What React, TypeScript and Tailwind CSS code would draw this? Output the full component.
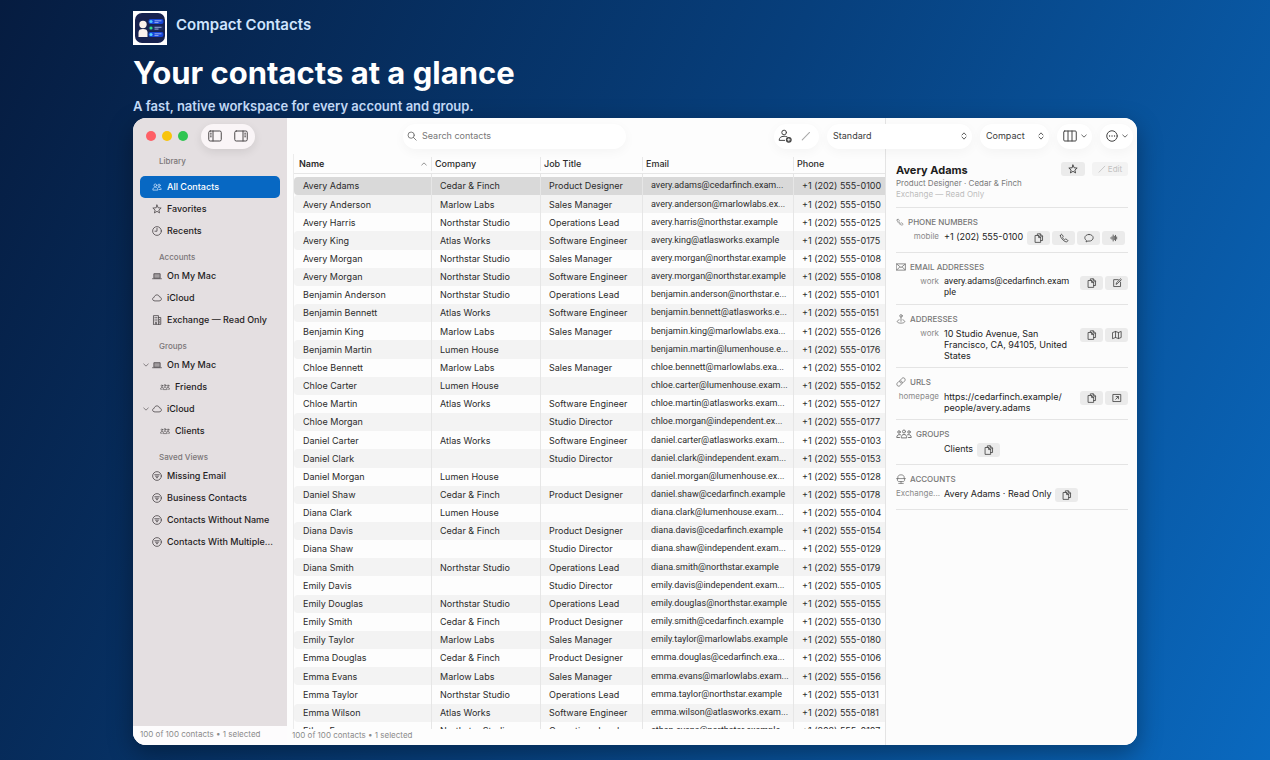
import type { ReactNode } from "react"

type IconProps = { className?: string }

function Svg({ className = "size-3", box = "0 0 24 24", children }: { className?: string; box?: string; children: ReactNode }) {
  return (
    <svg
      viewBox={box}
      className={`shrink-0 ${className}`}
      fill="none"
      stroke="currentColor"
      strokeWidth={2}
      strokeLinecap="round"
      strokeLinejoin="round"
      aria-hidden="true"
    >
      {children}
    </svg>
  )
}

const TwoPeople = ({ className }: IconProps) => (
  <Svg className={className}>
    <circle cx="8" cy="8" r="3.2" />
    <circle cx="17" cy="8" r="2.8" />
    <path d="M2 18.5c0-4 2.5-6 6-6s6 2 6 6zM15 12.6c4-.8 7 1.400 7 5.400h-5" />
  </Svg>
)

const ThreePeople = ({ className }: IconProps) => (
  <Svg className={className} box="0 0 32 20">
    <circle cx="16" cy="5" r="3" />
    <circle cx="6" cy="6" r="2.500" />
    <circle cx="26" cy="6" r="2.500" />
    <path d="M10.500 17c0-4 2-6 5.500-6s5.500 2 5.500 6zM9 11.500C4 10 1.500 13 1.500 17H7M23 11.500c5-1.500 7.500 1.500 7.500 5.500H25" />
  </Svg>
)

const Star = ({ className }: IconProps) => (
  <Svg className={className}>
    <path d="M12 2.500l2.800 6.600 7.200.6-5.500 4.700 1.700 7L12 17.600l-6.200 3.800 1.700-7L2 9.700l7.200-.6z" />
  </Svg>
)

const Clock = ({ className }: IconProps) => (
  <Svg className={className}>
    <circle cx="12" cy="12" r="10.500" />
    <path d="M12 5.500V12.500H7" />
  </Svg>
)

const Laptop = ({ className }: IconProps) => (
  <Svg className={className}>
    <path d="M4.500 16V6.500h15V16z" fill="currentColor" fillOpacity=".45" />
    <path d="M1.500 18.500h21" />
  </Svg>
)

const Cloud = ({ className }: IconProps) => (
  <Svg className={className}>
    <path d="M6.500 19C3.500 19 1.500 17 1.500 14.500c0-2.300 1.600-4 3.800-4.300C6 6.800 8.500 4.500 11.800 4.500c3.200 0 5.500 2 6.200 5 2.700.2 4.500 2.200 4.500 4.700 0 2.700-2 4.800-4.800 4.800z" />
  </Svg>
)

const Building = ({ className }: IconProps) => (
  <Svg className={className}>
    <path d="M3.500 22.500V1.500h12v21zM15.500 6H21v16.500h-5.500M7 6h1M11 6h1M7 10h1M11 10h1M7 14h1M11 14h1M8 22v-4h3v4M18.200 10.500v.5M18.200 14.500v.5M18.200 18.500v.5" />
  </Svg>
)

const Filter = ({ className }: IconProps) => (
  <Svg className={className}>
    <circle cx="12" cy="12" r="10.500" />
    <path d="M6.500 9h11M8.500 12.500h7M10.500 16h3" />
  </Svg>
)

const Chevron = ({ className }: IconProps) => (
  <Svg className={className}>
    <path d="M3 8l9 8.500L21 8" strokeWidth={3.2} />
  </Svg>
)

const UpDown = ({ className }: IconProps) => (
  <Svg className={className}>
    <path d="M6 9l6-6.500L18 9M6 15l6 6.500 6-6.500" strokeWidth={2.6} />
  </Svg>
)

const Copy = ({ className }: IconProps) => (
  <Svg className={className}>
    <path d="M8 5V2h7L20.500 7.500v10.500H16M15 2v5.500h5.500M3.500 6H11l5 5v11.500H3.500zM11 6v5h5" />
  </Svg>
)

const Phone = ({ className }: IconProps) => (
  <Svg className={className}>
    <path d="M3.500 5.500C5 3 6.500 2.500 7.500 4l2.300 3.500c.6 1 .2 1.800-.8 2.900-.6.700-.5 1.200 0 1.900a17 17 0 0 0 3.200 3.200c.7.500 1.300.6 1.900 0 1.100-1 1.900-1.400 2.900-.8l3.500 2.300c1.500 1 1 2.500-1.500 4-4 2.300-17.800-9.500-15.500-15.500z" />
  </Svg>
)

const Bubble = ({ className }: IconProps) => (
  <Svg className={className}>
    <path d="M12 3.500c5.800 0 10 3.500 10 8s-4.200 8-10 8c-.9 0-1.800-.1-2.600-.3L5 21.500l.8-3.800C3.400 16.300 2 14 2 11.500c0-4.500 4.200-8 10-8z" />
  </Svg>
)

const Waveform = ({ className }: IconProps) => (
  <Svg className={className}>
    <path d="M2.500 11.500v1M6 8.500v7M9.500 3v18M13 7v10M16.500 4v16M20 9v6" strokeWidth={2.4} />
  </Svg>
)

const Mail = ({ className }: IconProps) => (
  <Svg className={className}>
    <path d="M1.500 4.500h21v15h-21zM2 5l10 8.500L22 5M2 19l7-7M22 19l-7-7" />
  </Svg>
)

const Compose = ({ className }: IconProps) => (
  <Svg className={className}>
    <path d="M15 4H4v16.500h16.500V10M10 14.500l1-3.500 9.500-9 2 2-9.500 9.500z" />
  </Svg>
)

const Pin = ({ className }: IconProps) => (
  <Svg className={className}>
    <circle cx="12" cy="4.500" r="3" />
    <path d="M12 7.500V17.500M7.500 14C-1 17 3 22 12 22s13-5 4.500-8" />
  </Svg>
)

const MapIcon = ({ className }: IconProps) => (
  <Svg className={className}>
    <path d="M2 6l6.500-2.500 7 2.500L22 3.500V18l-6.500 2.500-7-2.500L2 20.500zM8.500 3.500V18M15.500 6v14.500" />
  </Svg>
)

const LinkIcon = ({ className }: IconProps) => (
  <Svg className={className}>
    <path d="M13 17l-3 3.500c-2 2-5 2-6.700.2s-1.700-4.700.2-6.700L7 10.500c2-2 5-1.800 6.700 0 .8.800 1.300 2 1.300 3M11 7l3-3.500c2-2 5-2 6.700-.2s1.700 4.700-.2 6.700L17 13.500c-2 2-5 1.800-6.700 0-.8-.8-1.300-2-1.300-3" />
  </Svg>
)

const OpenOut = ({ className }: IconProps) => (
  <Svg className={className}>
    <path d="M3 3.500h18v17H3zM9 15l6-6M10 8.500h5.500V14" />
  </Svg>
)

const Tray = ({ className }: IconProps) => (
  <Svg className={className}>
    <path d="M4.500 11V7c0-3 3-5 7.500-5s7.500 2 7.500 5v4M1.500 11h21M3.500 11v4c0 2 1.500 3 4 3h9c2.500 0 4-1 4-3v-4M12 18v4.500M6.500 22.500h11" />
  </Svg>
)

const Pencil = ({ className }: IconProps) => (
  <Svg className={className}>
    <path d="M3 21.500L20.500 3.500" strokeWidth={2.6} />
  </Svg>
)

const AddPerson = ({ className }: IconProps) => (
  <Svg className={className}>
    <circle cx="10.500" cy="6" r="4" strokeWidth={1.7} />
    <path d="M11.500 19.500H2c0-4.500 3-7 8.500-7 2 0 3.500.3 5 1" strokeWidth={1.7} />
    <circle cx="18.500" cy="18.500" r="4" fill="currentColor" />
    <path d="M18.500 16.500v4M16.500 18.500h4" stroke="#fff" strokeWidth={1.5} />
  </Svg>
)

const Columns = ({ className }: IconProps) => (
  <Svg className={className} box="0 0 28 24">
    <rect x="1.500" y="2" width="25" height="20" rx="2" />
    <path d="M10 2v20M18 2v20" />
  </Svg>
)

const More = ({ className }: IconProps) => (
  <Svg className={className}>
    <circle cx="12" cy="12" r="10.500" />
    <path d="M7 12h.1M12 12h.1M17 12h.1" strokeWidth={2.6} />
  </Svg>
)

const SearchIcon = ({ className }: IconProps) => (
  <Svg className={className}>
    <circle cx="10" cy="10" r="7.500" />
    <path d="M15.500 15.500L22 22" />
  </Svg>
)

const PanelLeft = ({ className }: IconProps) => (
  <Svg className={className} box="0 0 28 24">
    <rect x="1.500" y="2" width="25" height="20" rx="3" />
    <path d="M10 2v20M5 6.500h1.500M5 10h1.500M5 13.500h1.500" />
  </Svg>
)

const PanelRight = ({ className }: IconProps) => (
  <Svg className={className} box="0 0 28 24">
    <rect x="1.500" y="2" width="25" height="20" rx="3" />
    <path d="M18 2v20M21.500 6.500H23M21.500 10H23M21.500 13.500H23" />
  </Svg>
)

function AppLogo() {
  const rows = [
    { y: 8, dot: "#4cc3ff", bar: "#1746d8" },
    { y: 14.5, dot: "#2fe08a", bar: "#1b2c63" },
    { y: 21, dot: "#55d3ff", bar: "#1746d8" },
  ]
  return (
    <svg viewBox="0 0 34 34" className="size-[34px]" role="img" aria-label="Compact Contacts logo">
      <rect width="34" height="34" fill="#fff" />
      <rect x="2" y="2" width="30" height="30" rx="7" fill="#17224f" />
      <circle cx="10" cy="13.500" r="3.700" fill="#fbf1ec" />
      <path d="M5.500 26v-4.500c0-2.500 1.500-3.500 4.500-3.500s4.500 1 4.500 3.500V26z" fill="#fbf1ec" />
      {rows.map(({ y, dot, bar }) => (
        <g key={y}>
          <rect x="15.500" y={y} width="15" height="5" rx="2" fill={bar} />
          <circle cx="18" cy={y + 2.5} r="1.600" fill={dot} />
          <path d={`M21.500 ${y + 1.8}h7M21.500 ${y + 3.6}h4`} stroke="#b7c6f5" strokeWidth="0.800" />
        </g>
      ))}
    </svg>
  )
}

const sidebar = [
  {
    title: "Library",
    items: [
      { label: "All Contacts", icon: TwoPeople, active: true },
      { label: "Favorites", icon: Star },
      { label: "Recents", icon: Clock },
    ],
  },
  {
    title: "Accounts",
    items: [
      { label: "On My Mac", icon: Laptop },
      { label: "iCloud", icon: Cloud },
      { label: "Exchange — Read Only", icon: Building },
    ],
  },
  {
    title: "Groups",
    items: [
      { label: "On My Mac", icon: Laptop, open: true },
      { label: "Friends", icon: ThreePeople, nested: true },
      { label: "iCloud", icon: Cloud, open: true },
      { label: "Clients", icon: ThreePeople, nested: true },
    ],
  },
  {
    title: "Saved Views",
    items: [
      { label: "Missing Email", icon: Filter },
      { label: "Business Contacts", icon: Filter },
      { label: "Contacts Without Name", icon: Filter },
      { label: "Contacts With Multiple...", icon: Filter },
    ],
  },
] as {
  title: string
  items: { label: string; icon: (p: IconProps) => ReactNode; active?: boolean; open?: boolean; nested?: boolean }[]
}[]

const contacts = [
  ["Avery Adams", "Cedar & Finch", "Product Designer", "avery.adams@cedarfinch.exam...", "0100"],
  ["Avery Anderson", "Marlow Labs", "Sales Manager", "avery.anderson@marlowlabs.ex...", "0150"],
  ["Avery Harris", "Northstar Studio", "Operations Lead", "avery.harris@northstar.example", "0125"],
  ["Avery King", "Atlas Works", "Software Engineer", "avery.king@atlasworks.example", "0175"],
  ["Avery Morgan", "Northstar Studio", "Sales Manager", "avery.morgan@northstar.example", "0108"],
  ["Avery Morgan", "Northstar Studio", "Software Engineer", "avery.morgan@northstar.example", "0108"],
  ["Benjamin Anderson", "Northstar Studio", "Operations Lead", "benjamin.anderson@northstar.e...", "0101"],
  ["Benjamin Bennett", "Atlas Works", "Software Engineer", "benjamin.bennett@atlasworks.e...", "0151"],
  ["Benjamin King", "Marlow Labs", "Sales Manager", "benjamin.king@marlowlabs.exa...", "0126"],
  ["Benjamin Martin", "Lumen House", "", "benjamin.martin@lumenhouse.e...", "0176"],
  ["Chloe Bennett", "Marlow Labs", "Sales Manager", "chloe.bennett@marlowlabs.exa...", "0102"],
  ["Chloe Carter", "Lumen House", "", "chloe.carter@lumenhouse.exam...", "0152"],
  ["Chloe Martin", "Atlas Works", "Software Engineer", "chloe.martin@atlasworks.exam...", "0127"],
  ["Chloe Morgan", "", "Studio Director", "chloe.morgan@independent.ex...", "0177"],
  ["Daniel Carter", "Atlas Works", "Software Engineer", "daniel.carter@atlasworks.exam...", "0103"],
  ["Daniel Clark", "", "Studio Director", "daniel.clark@independent.exam...", "0153"],
  ["Daniel Morgan", "Lumen House", "", "daniel.morgan@lumenhouse.ex...", "0128"],
  ["Daniel Shaw", "Cedar & Finch", "Product Designer", "daniel.shaw@cedarfinch.example", "0178"],
  ["Diana Clark", "Lumen House", "", "diana.clark@lumenhouse.exam...", "0104"],
  ["Diana Davis", "Cedar & Finch", "Product Designer", "diana.davis@cedarfinch.example", "0154"],
  ["Diana Shaw", "", "Studio Director", "diana.shaw@independent.exam...", "0129"],
  ["Diana Smith", "Northstar Studio", "Operations Lead", "diana.smith@northstar.example", "0179"],
  ["Emily Davis", "", "Studio Director", "emily.davis@independent.exam...", "0105"],
  ["Emily Douglas", "Northstar Studio", "Operations Lead", "emily.douglas@northstar.example", "0155"],
  ["Emily Smith", "Cedar & Finch", "Product Designer", "emily.smith@cedarfinch.example", "0130"],
  ["Emily Taylor", "Marlow Labs", "Sales Manager", "emily.taylor@marlowlabs.example", "0180"],
  ["Emma Douglas", "Cedar & Finch", "Product Designer", "emma.douglas@cedarfinch.exa...", "0106"],
  ["Emma Evans", "Marlow Labs", "Sales Manager", "emma.evans@marlowlabs.exam...", "0156"],
  ["Emma Taylor", "Northstar Studio", "Operations Lead", "emma.taylor@northstar.example", "0131"],
  ["Emma Wilson", "Atlas Works", "Software Engineer", "emma.wilson@atlasworks.exam...", "0181"],
  ["Ethan Evans", "Northstar Studio", "Operations Lead", "ethan.evans@northstar.example", "0107"],
]

function Sidebar() {
  return (
    <aside className="flex w-[154px] shrink-0 flex-col bg-[#e4dfe1]">
      <div className="flex h-9 shrink-0 items-center pl-[13px]">
        <div className="flex gap-1.5">
          <button aria-label="Close" className="size-2.5 rounded-full bg-[#fe5f66]" />
          <button aria-label="Minimize" className="size-2.5 rounded-full bg-[#f8c40b]" />
          <button aria-label="Zoom" className="size-2.5 rounded-full bg-[#2fc551]" />
        </div>
        <div className="ml-[13px] flex h-[25px] w-[54px] items-center justify-between rounded-full bg-[#faf5f7] px-[7px] text-[#4c484a] shadow-[0_3px_10px_rgba(0,0,0,0.09)]">
          <button aria-label="Toggle sidebar"><PanelLeft className="h-3 w-3.5" /></button>
          <button aria-label="Toggle inspector"><PanelRight className="h-3 w-3.5" /></button>
        </div>
      </div>
      <nav className="min-h-0 flex-1 overflow-hidden px-[7px]">
        {sidebar.map((section, i) => (
          <section key={section.title} className={i === 0 ? "" : "pt-2"}>
            <h3 className={`pl-[19px] text-[8px]/[15px] font-medium text-[#7b7678] ${i === 0 ? "mb-[7px]" : ""}`}>{section.title}</h3>
            {section.items.map(({ label, icon: Icon, active, open, nested }) => (
              <button
                key={label}
                className={`flex h-[22px] w-full items-center rounded-[5px] text-[9px] font-medium whitespace-nowrap ${
                  active ? "bg-[#0768c3] text-white" : "text-[#1f1c1d]"
                } ${nested ? "pl-5" : ""}`}
              >
                {!nested && (
                  <span className="flex w-3 shrink-0 justify-center text-[#6c6769]">
                    {open && <Chevron className="size-1.5" />}
                  </span>
                )}
                <Icon className={`${nested ? "h-2 w-2.5" : "size-2.5"} ${active ? "text-[#b9d9f7]" : "text-[#4f4b4d]"}`} />
                <span className="ml-[5px]">{label}</span>
              </button>
            ))}
          </section>
        ))}
      </nav>
      <footer className="h-[19px] shrink-0 bg-[#fdfcfd] pl-[7px] text-[8px]/[17px] text-[#8b8b8b]">100 of 100 contacts • 1 selected</footer>
    </aside>
  )
}

const pill = "flex h-[25px] items-center rounded-full bg-white shadow-[0_3px_12px_rgba(0,0,0,0.04)]"

function PopUp({ label, value, className }: { label: string; value: string; className: string }) {
  return (
    <div className={`${pill} ${className} pr-1`}>
      <select
        aria-label={label}
        defaultValue={value}
        className="h-full min-w-0 flex-1 appearance-none bg-transparent pl-1.5 text-[9px] text-[#3c3c3c] outline-none"
      >
        <option>{value}</option>
      </select>
      <UpDown className="size-2 text-[#444]" />
    </div>
  )
}

function Toolbar() {
  return (
    <header className="z-10 col-start-1 col-end-3 row-start-1 flex items-center pr-1 pl-[116px] text-[#444]">
      <label className={`${pill} w-[223px] pl-1`}>
        <SearchIcon className="size-2.5 text-[#666]" />
        <input
          type="search"
          aria-label="Search contacts"
          placeholder="Search contacts"
          className="ml-[5px] min-w-0 flex-1 bg-transparent text-[9px] outline-none placeholder:text-[#777]"
        />
      </label>
      <div className="ml-auto flex gap-2">
        <div className={`${pill} w-[45px] justify-between pr-2 pl-1`}>
          <button aria-label="Add contact"><AddPerson className="size-3.5" /></button>
          <button aria-label="Edit contact" className="text-[#aaa]"><Pencil className="size-2.5" /></button>
        </div>
        <PopUp label="View" value="Standard" className="w-[145px]" />
        <PopUp label="Density" value="Compact" className="w-[69px]" />
        <button aria-label="Columns" className={`${pill} w-[35px] justify-center gap-1`}>
          <Columns className="h-3 w-3.5" />
          <Chevron className="size-1.5" />
        </button>
        <button aria-label="More actions" className={`${pill} w-[33px] justify-center gap-1`}>
          <More className="size-3" />
          <Chevron className="size-1.5" />
        </button>
      </div>
    </header>
  )
}

function ContactTable() {
  return (
    <section className="col-start-1 row-start-2 flex min-h-0 flex-col">
      <div className="ml-1.5 min-h-0 flex-1 overflow-hidden border-l border-[#ececec]">
        <table className="h-[586px] w-full table-fixed border-separate border-spacing-0 text-left text-[9px] whitespace-nowrap text-[#2b2b2b]">
          <colgroup>
            <col className="w-[137px]" />
            <col className="w-[109px]" />
            <col className="w-[102px]" />
            <col className="w-[151px]" />
            <col />
          </colgroup>
          <thead>
            <tr className="h-5">
              {["Name", "Company", "Job Title", "Email", "Phone"].map((name, i) => (
                <th key={name} scope="col" className="border-b border-[#e6e6e6] p-0 font-medium">
                  <div
                    className={`flex h-3.5 items-center justify-between pr-1 ${
                      i === 0 ? "pl-[5px] font-semibold" : "border-l border-[#e8e8e8] pl-[3px]"
                    }`}
                  >
                    {name}
                    {i === 0 && <Chevron className="size-1.5 rotate-180 text-[#777]" />}
                  </div>
                </th>
              ))}
            </tr>
          </thead>
          <tbody className="[&_td]:border-[#e6e6e6] [&_td+td]:border-l">
            <tr className="h-[3px]">
              {[0, 1, 2, 3, 4].map((i) => (
                <td key={i} className="p-0" />
              ))}
            </tr>
            {contacts.map(([name, company, job, email, phone], i) => (
              <tr key={i} className={`h-[18px] ${i === 0 ? "[&_td]:bg-[#d9d9d9]" : i % 2 ? "[&_td]:bg-[#f3f3f3]" : ""}`}>
                <td className="rounded-l-[4px] p-0 pl-[9px]">{name}</td>
                <td className="p-0 pl-2">{company}</td>
                <td className="p-0 pl-2">{job}</td>
                <td className="p-0 pl-2 font-['Roboto',sans-serif]">{email}</td>
                <td className="p-0 pl-2">+1 (202) 555-{phone}</td>
              </tr>
            ))}
          </tbody>
        </table>
      </div>
      <footer className="h-4 shrink-0 pl-[5px] text-[8px]/[12px] text-[#8b8b8b]">100 of 100 contacts • 1 selected</footer>
    </section>
  )
}

function ActionButton({ label, children }: { label: string; children: ReactNode }) {
  return (
    <button aria-label={label} className="flex h-3.5 w-[23px] items-center justify-center rounded-[3px] bg-[#ebebeb] text-[#444]">
      {children}
    </button>
  )
}

function Field({
  icon,
  title,
  label,
  value,
  wide,
  children,
}: {
  icon: ReactNode
  title: string
  label?: string
  value: ReactNode
  wide?: boolean
  children: ReactNode
}) {
  return (
    <section className="border-b border-[#e4e4e4] pt-2 pb-1.5">
      <h3 className="flex h-[11px] items-center gap-1 text-[8px] font-medium text-[#777]">
        {icon}
        {title}
      </h3>
      <div className="mt-1 flex min-h-[15px] items-start">
        <span className="w-[43px] shrink-0 text-right text-[8px]/[10px] whitespace-nowrap text-[#8a8a8a]">{label}</span>
        <p className={`ml-[5px] text-[9px]/[11px] text-[#222] ${wide ? "w-[130px]" : ""}`}>{value}</p>
        <div className={`flex gap-0.5 ${wide ? "ml-auto" : "ml-1"}`}>
          <ActionButton label={`Copy ${title.toLowerCase()}`}><Copy className="size-2.5" /></ActionButton>
          {children}
        </div>
      </div>
    </section>
  )
}

function Inspector() {
  return (
    <aside className="col-start-2 row-span-2 row-start-1 border-l border-[#e4e4e4] bg-[#fcfcfc] pt-11 pr-[9px] pl-2.5">
      <div className="flex h-[46px] items-start justify-between border-b border-[#e4e4e4]">
        <div>
          <h2 className="text-[11px]/[16px] font-bold text-[#1c1c1c]">Avery Adams</h2>
          <p className="text-[8px]/[11px] text-[#7a7a7a]">Product Designer · Cedar &amp; Finch</p>
          <p className="text-[8px]/[11px] text-[#bdbdbd]">Exchange — Read Only</p>
        </div>
        <div className="flex gap-[7px]">
          <button aria-label="Favorite" className="flex h-3.5 w-6 items-center justify-center rounded-[3px] bg-[#ebebeb] text-[#333]">
            <Star className="size-2.5" />
          </button>
          <button disabled className="flex h-3.5 w-9 items-center justify-center gap-0.5 rounded-[3px] bg-[#f3f3f3] text-[8px] text-[#c2c2c2]">
            <Pencil className="size-2" />
            Edit
          </button>
        </div>
      </div>
      <Field icon={<Phone className="size-2" />} title="PHONE NUMBERS" label="mobile" value="+1 (202) 555-0100">
        <ActionButton label="Call"><Phone className="size-2.5" /></ActionButton>
        <ActionButton label="Message"><Bubble className="size-2.5" /></ActionButton>
        <ActionButton label="Audio"><Waveform className="size-2" /></ActionButton>
      </Field>
      <Field
        icon={<Mail className="size-2.5" />}
        title="EMAIL ADDRESSES"
        label="work"
        wide
        value={<span className="block font-['Roboto',sans-serif]">avery.adams@cedarfinch.exam<br />ple</span>}
      >
        <ActionButton label="Compose"><Compose className="size-2.5" /></ActionButton>
      </Field>
      <Field
        icon={<Pin className="size-2.5" />}
        title="ADDRESSES"
        label="work"
        wide
        value={<>10 Studio Avenue, San<br />Francisco, CA, 94105, United<br />States</>}
      >
        <ActionButton label="Show on map"><MapIcon className="size-2.5" /></ActionButton>
      </Field>
      <Field
        icon={<LinkIcon className="size-2.5" />}
        title="URLS"
        label="homepage"
        wide
        value={<a href="#">https://cedarfinch.example/<br />people/avery.adams</a>}
      >
        <ActionButton label="Open link"><OpenOut className="size-2.5" /></ActionButton>
      </Field>
      <Field icon={<ThreePeople className="h-2.5 w-4" />} title="GROUPS" value="Clients">{null}</Field>
      <Field icon={<Tray className="size-2.5" />} title="ACCOUNTS" label="Exchange..." value="Avery Adams · Read Only">{null}</Field>
    </aside>
  )
}

export default function App() {
  return (
    <div className="flex h-screen flex-col overflow-hidden bg-linear-[115deg,#061c40_0%,#073f7c_50%,#0a69bf_100%] px-[133px] pt-[11px] pb-[15px] font-['Inter',sans-serif]">
      <div className="flex h-[34px] shrink-0 items-start gap-[9px]">
        <AppLogo />
        <p className="text-[15px]/[27px] font-semibold text-[#cfe4fd]">Compact Contacts</p>
      </div>
      <h1 className="mt-2 text-[31px]/[40px] font-bold whitespace-nowrap text-white">Your contacts at a glance</h1>
      <p className="mt-1 text-[13px]/[18px] font-semibold text-[#c5dcf9]">A fast, native workspace for every account and group.</p>
      <main className="mt-[3px] flex min-h-0 flex-1 overflow-hidden rounded-[13px] bg-[#fdfdfd] shadow-[0_8px_24px_rgba(0,0,0,0.35)]">
        <Sidebar />
        <div className="grid min-w-0 flex-1 grid-cols-[minmax(0,1fr)_252px] grid-rows-[36px_minmax(0,1fr)]">
          <Toolbar />
          <ContactTable />
          <Inspector />
        </div>
      </main>
    </div>
  )
}
